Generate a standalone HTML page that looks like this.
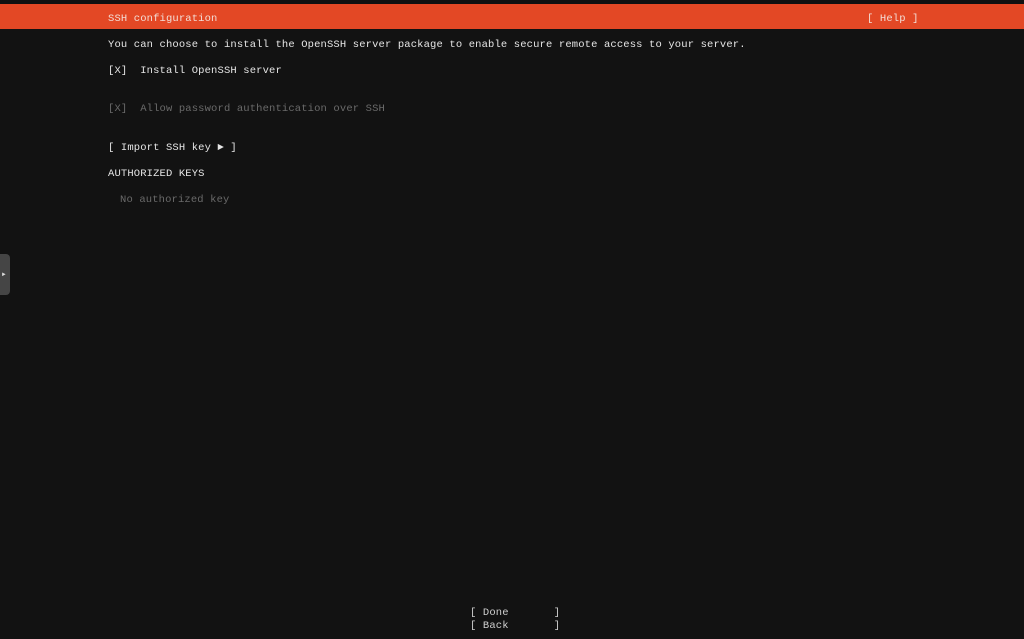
<!DOCTYPE html>
<html><head><meta charset="utf-8"><style>
html,body{margin:0;padding:0;width:1024px;height:639px;background:#121212;overflow:hidden}
.t{position:absolute;font-family:"Liberation Mono",monospace;font-size:10.5px;letter-spacing:0.14px;color:#e6e6e6;white-space:pre;line-height:13px}
.d{color:#6a6a6a}
#top{position:absolute;left:0;top:0;width:1024px;height:4px;background:#111}
#bar{position:absolute;left:0;top:4px;width:1024px;height:25px;background:#e34825}
#tab{position:absolute;left:-4px;top:254px;width:14px;height:41px;background:#454545;border-radius:4px}
</style></head><body>
<div id="top"></div>
<div id="bar"></div>
<div class="t" style="left:108px;top:13px;color:#f3ddd6">SSH configuration</div>
<div class="t" style="left:867px;top:13px;color:#f3ddd6">[ Help ]</div>
<div class="t" style="left:108px;top:39px">You can choose to install the OpenSSH server package to enable secure remote access to your server.</div>
<div class="t" style="left:108px;top:65px">[X]  Install OpenSSH server</div>
<div class="t d" style="left:108px;top:103px">[X]  Allow password authentication over SSH</div>
<div class="t" style="left:108px;top:142px">[ Import SSH key ► ]</div>
<div class="t" style="left:108px;top:168px">AUTHORIZED KEYS</div>
<div class="t d" style="left:120px;top:194px">No authorized key</div>
<div class="t" style="left:470px;top:607px;color:#cfcfcf">[ Done       ]</div>
<div class="t" style="left:470px;top:620px;color:#cfcfcf">[ Back       ]</div>
<div id="tab"></div>
<div class="t" style="left:2px;top:268px;font-size:6px;color:#ddd">►</div>
</body></html>
